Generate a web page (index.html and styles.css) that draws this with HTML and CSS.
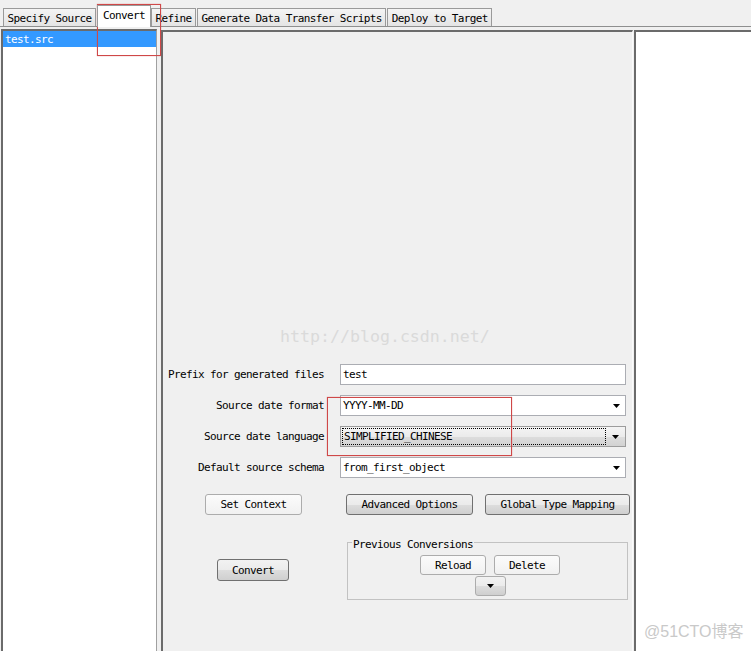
FILE: index.html
```html
<!DOCTYPE html>
<html>
<head>
<meta charset="utf-8">
<title>Convert</title>
<link rel="stylesheet" href="styles.css">
</head>
<body>
<div class="app">
  <div class="tabbar">
    <div class="tab">Specify Source</div>
    <div class="tab selected">Convert</div>
    <div class="tab">Refine</div>
    <div class="tab">Generate Data Transfer Scripts</div>
    <div class="tab">Deploy to Target</div>
  </div>
  <div class="panes">
    <div class="list">
      <div class="item selected">test.src</div>
    </div>
    <div class="center">
      <div class="form">
        <div class="lbl">Prefix for generated files</div>
        <div class="input">test</div>
        <div class="lbl">Source date format</div>
        <div class="combo"><span class="val">YYYY-MM-DD</span><svg class="arrow" width="7" height="4" viewBox="0 0 7 4"><path d="M0 0H7L3.5 4Z"/></svg></div>
        <div class="lbl">Source date language</div>
        <div class="combo focus"><span class="focusrect">SIMPLIFIED_CHINESE</span><span class="abtn"><svg class="arrow" width="7" height="4" viewBox="0 0 7 4"><path d="M0 0H7L3.5 4Z"/></svg></span></div>
        <div class="lbl">Default source schema</div>
        <div class="combo"><span class="val">from_first_object</span><svg class="arrow" width="7" height="4" viewBox="0 0 7 4"><path d="M0 0H7L3.5 4Z"/></svg></div>
      </div>
      <div class="btnrow">
        <div class="btn light w-ctx">Set Context</div>
        <div class="btn w-adv">Advanced Options</div>
        <div class="btn w-map">Global Type Mapping</div>
      </div>
      <div class="bottomrow">
        <div class="btn w-conv">Convert</div>
        <fieldset class="group">
          <legend><span class="legend-text">Previous Conversions</span></legend>
          <div class="gbody">
            <div class="grow">
              <div class="btn light small">Reload</div>
              <div class="btn light small">Delete</div>
            </div>
            <div class="btn mini"><svg class="arrow" width="7" height="4" viewBox="0 0 7 4"><path d="M0 0H7L3.5 4Z"/></svg></div>
          </div>
        </fieldset>
      </div>
    </div>
    <div class="right"></div>
  </div>
  <div class="wm-csdn">http://blog.csdn.net/</div>
  <div class="wm-cto">@51CTO博客</div>
  <div class="mark mark-tab"></div>
  <div class="mark mark-date"></div>
</div>
</body>
</html>
```

FILE: styles.css
```css
* { box-sizing: border-box; }
html, body { margin: 0; padding: 0; }
body {
  width: 751px;
  height: 651px;
  overflow: hidden;
  background: #f0f0f0;
  font-family: "DejaVu Sans Mono", "Liberation Mono", monospace;
  font-size: 11px;
  letter-spacing: -0.62px;
  color: #000;
}
.app { position: relative; width: 751px; height: 651px; }

/* tabs */
.tabbar {
  height: 27px;
  border-bottom: 1px solid #8e8f8f;
  display: flex;
  align-items: flex-end;
  padding-left: 3px;
  gap: 1px;
}
.tab {
  height: 18px;
  line-height: 19px;
  padding: 0 3.5px;
  border: 1px solid #9a9a9a;
  border-bottom: none;
  background: linear-gradient(#f4f4f4, #e4e4e4);
  white-space: nowrap;
}
.tab.selected {
  height: 22px;
  line-height: 20px;
  margin-bottom: -1px;
  margin-right: -1px;
  padding: 0 5px;
  background: #fff;
  position: relative;
  z-index: 1;
}

/* panes */
.panes {
  display: flex;
  height: 624px;
  padding-top: 2px;
  padding-left: 1px;
}
.list {
  width: 156px;
  background: #fff;
  border-top: 2px solid #6b6b6b;
  border-left: 2px solid #6b6b6b;
  border-right: 1px solid #a0a0a0;
  margin-right: 4px;
}
.item { height: 16px; line-height: 17px; padding-left: 2px; }
.item.selected { background: #3399ff; color: #fff; }

.center {
  width: 472px;
  margin-top: 1px;
  margin-right: 1px;
  border-top: 2px solid #6b6b6b;
  border-left: 2px solid #6b6b6b;
  border-right: 1px solid #fafafa;
  display: flex;
  flex-direction: column;
}
.right {
  flex: 1;
  margin-top: 1px;
  background: #fff;
  border-top: 2px solid #6b6b6b;
  border-left: 2px solid #6b6b6b;
}

/* form */
.form {
  display: grid;
  grid-template-columns: 156px 286px;
  grid-auto-rows: 21px;
  column-gap: 16px;
  row-gap: 10px;
  margin-top: 332px;
  padding-left: 5px;
}
.lbl { text-align: right; line-height: 22px; white-space: nowrap; }
.input {
  background: #fff;
  border: 1px solid #abadb3;
  padding-left: 2px;
  line-height: 20px;
}
.combo {
  display: flex;
  align-items: center;
  justify-content: space-between;
  background: #fff;
  border: 1px solid #abadb3;
  padding-left: 2px;
  padding-right: 5px;
}
.combo .val { line-height: 20px; }
.arrow { display: block; fill: #000; }
.combo.focus {
  padding: 0;
  border-color: #9c9c9c;
  background: linear-gradient(#f4f4f4 0%, #ebebeb 50%, #dddddd 51%, #d2d2d2 100%);
  align-items: stretch;
}
.focusrect {
  flex: 1;
  margin: 1px 0 1px 1px;
  border: 1px dotted #000;
  padding-left: 1px;
  line-height: 16px;
}
.abtn {
  width: 19px;
  display: flex;
  align-items: center;
  justify-content: center;
}

/* buttons */
.btn {
  height: 21px;
  line-height: 20px;
  text-align: center;
  white-space: nowrap;
  border: 1px solid #707070;
  border-radius: 3px;
  background: linear-gradient(#f2f2f2 0%, #ebebeb 50%, #dddddd 51%, #cfcfcf 100%);
}
.btn.light {
  border-color: #acacac;
  background: linear-gradient(#fbfbfb, #f1f1f1);
}
.btnrow {
  display: flex;
  margin-top: 16px;
  padding-left: 42px;
}
.w-ctx { width: 97px; }
.w-adv { width: 127px; margin-left: 44px; }
.w-map { width: 145px; margin-left: 12px; }

.bottomrow {
  display: flex;
  align-items: flex-start;
  margin-top: 21px;
  padding-left: 54px;
}
.w-conv { width: 72px; height: 22px; line-height: 21px; margin-top: 23px; }
.group {
  margin: 0 0 0 58px;
  width: 281px;
  padding: 0 0 3px 0;
  border: 1px solid #c2c2c2;
  min-width: 0;
}
.group legend {
  padding: 0 1px;
  margin-left: 4px;
  line-height: 12px;
  height: 12px;
}
.legend-text { display: block; line-height: 17px; height: 12px; }
.gbody {
  display: flex;
  flex-direction: column;
  align-items: center;
  padding-top: 7px;
  padding-left: 5px;
}
.grow { display: flex; gap: 8px; }
.small { width: 66px; height: 20px; line-height: 19px; }
.mini {
  width: 31px;
  height: 20px;
  margin-top: 1px;
  display: flex;
  align-items: center;
  justify-content: center;
  border-color: #acacac;
}

/* overlays */
.wm-csdn {
  position: absolute;
  left: 280px;
  top: 327px;
  font-family: "DejaVu Sans Mono", monospace;
  font-size: 16.6px;
  letter-spacing: 0;
  line-height: 20px;
  color: #dadada;
}
.wm-cto {
  position: absolute;
  left: 644px;
  top: 622px;
  font-family: "Liberation Sans", "Noto Sans CJK SC", sans-serif;
  font-size: 16px;
  letter-spacing: 0;
  line-height: 20px;
  color: #c9c9c9;
}
.mark {
  position: absolute;
  border: 1px solid #cf4848;
  box-shadow: 0 0 1px rgba(210, 60, 60, 0.6);
}
.mark-tab { left: 97px; top: 4px; width: 64px; height: 52px; }
.mark-date { left: 327px; top: 397px; width: 185px; height: 59px; }
```
